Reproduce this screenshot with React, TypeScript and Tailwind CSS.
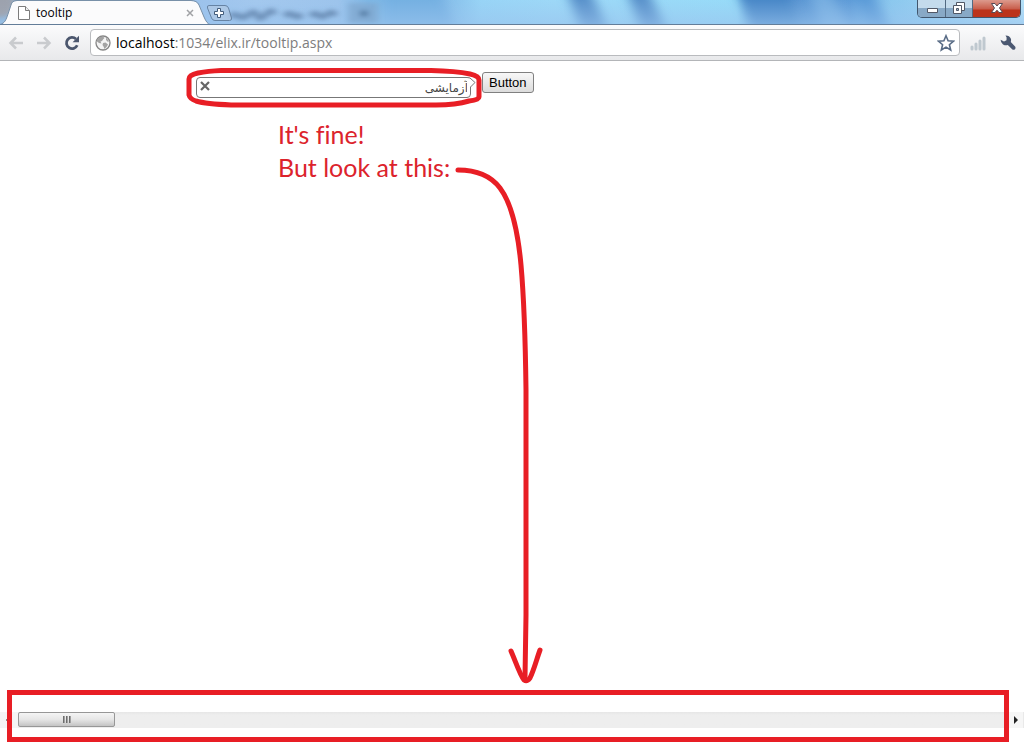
import React from "react";

function Glass() {
  return (
    <svg
      className="absolute inset-0 h-full w-full"
      viewBox="0 0 1024 25"
      preserveAspectRatio="none"
      aria-hidden="true"
    >
      <defs>
        <linearGradient id="sky" x1="0" x2="1" y1="0" y2="0">
          <stop offset="0" stopColor="#8fb4d6" />
          <stop offset="0.2" stopColor="#9dc3ec" />
          <stop offset="0.25" stopColor="#a3c8ee" />
          <stop offset="0.33" stopColor="#9dc4ec" />
          <stop offset="0.36" stopColor="#7db8e6" />
          <stop offset="0.42" stopColor="#7db3e3" />
          <stop offset="0.47" stopColor="#98d4f6" />
          <stop offset="0.54" stopColor="#9dd8f7" />
          <stop offset="0.72" stopColor="#97dbf8" />
          <stop offset="0.75" stopColor="#5a94d0" />
          <stop offset="0.83" stopColor="#5f9cd8" />
          <stop offset="0.87" stopColor="#8bc8ee" />
          <stop offset="1" stopColor="#b5e2f8" />
        </linearGradient>
        <linearGradient id="haze" x1="0" x2="0" y1="0" y2="1">
          <stop offset="0" stopColor="#9ac4ee" stopOpacity="0" />
          <stop offset="1" stopColor="#9ac4ee" stopOpacity="0.6" />
        </linearGradient>
        <filter id="soft" x="-20%" y="-50%" width="140%" height="200%">
          <feGaussianBlur stdDeviation="6 2" />
        </filter>
        <filter id="ghost" x="-20%" y="-50%" width="140%" height="200%">
          <feGaussianBlur stdDeviation="3 2" />
        </filter>
      </defs>
      <rect width="1024" height="25" fill="url(#sky)" />
      <g filter="url(#soft)">
        <path d="M568 -5H592L608 30H580Z" fill="#5a92cb" />
        <path d="M628 -5H650L666 30H640Z" fill="#5a92cb" />
        <path d="M385 -5H440L455 30H385Z" fill="#74b0e2" />
        <path d="M738 -5H790L800 30H752Z" fill="#4a88c8" />
        <path d="M810 -5H832L850 30H822Z" fill="#76ade0" />
        <path d="M852 -5H872L890 30H866Z" fill="#5c9bd8" />
      </g>
      <rect width="1024" height="25" fill="url(#haze)" />
      <g filter="url(#ghost)">
        <rect x="348" y="3" width="30" height="21" fill="#7fa5cd" opacity="0.7" />
        <path
          d="M230 17q5-3 9 0t10-2 8 1 9-1 8 0M284 16q6-3 10 0t8-1M310 16q6-3 9 0t8-1 9 1"
          fill="none"
          stroke="#4b6c95"
          strokeWidth="6"
          opacity="0.6"
        />
        <path d="M360 14h8" stroke="#42678f" strokeWidth="6" opacity="0.7" />
      </g>
      <ellipse cx="0" cy="4" rx="15" ry="14" fill="#ad8d7d" opacity="0.45" filter="url(#ghost)" />
    </svg>
  );
}

function TabStrip() {
  return (
    <header className="relative flex h-[25px] items-start overflow-hidden border-b border-[#637d99] bg-[#8fbde8]">
      <Glass />
      <div className="relative z-10 -mb-px flex h-[25px] w-[210px] shrink-0 items-center pl-4 pr-3">
        <svg className="absolute left-0 top-0 h-[25px] w-[210px]" viewBox="0 0 210 25" aria-hidden="true">
          <path
            d="M0 25C5 23 6 20 8 14L11 5Q12 1 17 1H191Q197 1 199 5L204 17Q207 24 210 25Z"
            fill="#fbfbfc"
          />
          <path
            d="M0 24.5C5 23 6 20 8 14L11 5Q12 .5 17 .5H191Q197 .5 199 5L204 17Q207 24 210 24.5"
            fill="none"
            stroke="#7890a8"
          />
        </svg>
        <svg className="relative h-4 w-4 shrink-0" viewBox="0 0 16 16" aria-hidden="true">
          <path d="M2.500 1.500H9.500L13.500 5.500V14.500H2.500Z" fill="#fff" stroke="#7c7c7c" />
          <path d="M9.500 1.500V5.500H13.500" fill="#eee" stroke="#7c7c7c" />
        </svg>
        <span className="relative ml-1 flex-1 font-['Open_Sans',sans-serif] text-[12px] leading-4 text-black">
          tooltip
        </span>
        <button type="button" aria-label="Close tab" className="relative flex h-4 w-4 items-center justify-center">
          <svg className="h-2 w-2" viewBox="0 0 8 8" aria-hidden="true">
            <path d="M1 1L7 7M7 1L1 7" stroke="#a0a2a5" strokeWidth="1.500" />
          </svg>
        </button>
      </div>
      <button type="button" aria-label="New tab" className="relative z-10 -ml-1 mt-1 h-[18px] w-[27px] shrink-0">
        <svg className="h-[18px] w-[27px]" viewBox="0 0 27 18" aria-hidden="true">
          <path
            d="M3 1.500H19Q21.500 1.500 22.500 4L25.500 14Q26 16.500 23.500 16.500H9Q6.500 16.500 5.500 14L1.500 4Q.8 1.500 3 1.500Z"
            fill="#b3cae2"
            fillOpacity=".65"
            stroke="#6683a4"
          />
          <path
            d="M11.500 4.500H14.500V7.500H17.500V10.500H14.500V13.500H11.500V10.500H8.500V7.500H11.500Z"
            fill="#fff"
            stroke="#435c7b"
          />
        </svg>
      </button>
      <div className="relative z-10 ml-auto mr-[3px] flex h-[18px] overflow-hidden rounded-b-[5px] border border-t-0 border-[#41566d]">
        <button
          type="button"
          aria-label="Minimize"
          className="flex w-7 items-center justify-center border-r border-[#526a82] bg-linear-to-b from-[#c4dbec] from-50% to-[#88a9c6] to-50%"
        >
          <svg className="h-4 w-4" viewBox="0 0 16 16" aria-hidden="true">
            <path d="M3.500 7.500H13.500V11.500H3.500Z" fill="#fff" stroke="#515866" />
          </svg>
        </button>
        <button
          type="button"
          aria-label="Restore"
          className="flex w-[27px] items-center justify-center border-r border-[#526a82] bg-linear-to-b from-[#c4dbec] from-50% to-[#88a9c6] to-50%"
        >
          <svg className="h-4 w-4" viewBox="0 0 16 16" aria-hidden="true">
            <path d="M5.500 1.500H13.500V9.500H5.500Z" fill="#fff" stroke="#515866" />
            <path d="M2.500 4.500H10.500V12.500H2.500Z" fill="#fff" stroke="#515866" />
            <path d="M5.500 7.500H7.500V9.500H5.500Z" fill="#9bb8d0" stroke="#515866" />
          </svg>
        </button>
        <button
          type="button"
          aria-label="Close window"
          className="flex w-[47px] items-center justify-center bg-linear-to-b from-[#dc9a8d] from-0% via-[#c9604e] via-50% to-[#bb331b] to-60%"
        >
          <svg className="h-4 w-4" viewBox="0 0 16 16" aria-hidden="true">
            <path
              d="M2.500 2.500H6L8 5 10 2.500H13.500L10.500 7 13.500 11.500H10L8 9.200 6 11.500H2.500L5.500 7Z"
              fill="#fff"
              stroke="#574b55"
            />
          </svg>
        </button>
      </div>
    </header>
  );
}

function Toolbar() {
  return (
    <nav
      aria-label="Navigation"
      className="flex h-9 items-center border-b border-[#b3b5b8] bg-linear-to-b from-[#fbfbfc] to-[#e8e9eb] pl-2 pr-2"
    >
      <button type="button" aria-label="Back" className="h-4 w-4">
        <svg viewBox="0 0 16 16" aria-hidden="true">
          <path d="M15 8H3M8 2.500L2.500 8 8 13.500" fill="none" stroke="#c9cbce" strokeWidth="2.500" />
        </svg>
      </button>
      <button type="button" aria-label="Forward" className="ml-3 h-4 w-4">
        <svg viewBox="0 0 16 16" aria-hidden="true">
          <path d="M1 8H13M8 2.500L13.500 8 8 13.500" fill="none" stroke="#c9cbce" strokeWidth="2.500" />
        </svg>
      </button>
      <button type="button" aria-label="Reload" className="ml-3 h-4 w-4">
        <svg viewBox="0 0 16 16" aria-hidden="true">
          <path d="M12 4A5.600 5.600 0 1 0 13.200 10.200" fill="none" stroke="#4b566d" strokeWidth="2.800" />
          <path d="M15 .8V7.200H8.600Z" fill="#4b566d" />
        </svg>
      </button>
      <div className="ml-[10px] flex h-[27px] min-w-0 flex-1 items-center rounded-[4px] border border-[#b9bbbe] bg-white px-1">
        <svg className="h-4 w-4 shrink-0" viewBox="0 0 16 16" aria-hidden="true">
          <circle cx="8" cy="8" r="7" fill="#f4f4f4" stroke="#858585" strokeWidth="1.300" />
          <path
            d="M2 5Q4 1.500 8 1.600L9.500 3 8 4.500 7 6 5.500 6.500 6.500 8.500 4 8 2 6.500ZM8 8L10.500 7.500 13 9.500 11.500 12 9.500 14 8.500 11.500 7.500 10ZM11 2.500L14 6 13 7 11 5Z"
            fill="#a3a3a3"
          />
        </svg>
        <p
          role="textbox"
          aria-label="Address"
          tabIndex={0}
          className="ml-[5px] min-w-0 flex-1 truncate font-['Open_Sans',sans-serif] text-[14px] leading-5 text-[#7d7d7d]"
        >
          <span className="text-black">localhost</span>:1034/elix.ir/tooltip.aspx
        </p>
        <button type="button" aria-label="Bookmark this page" className="h-[18px] w-[18px]">
          <svg viewBox="0 0 18 18" aria-hidden="true">
            <path
              d="M9 1.800L11.100 6.800 16.500 7.200 12.400 10.700 13.700 16 9 13.100 4.300 16 5.600 10.700 1.500 7.200 6.900 6.800Z"
              fill="#fff"
              stroke="#596c86"
              strokeWidth="1.600"
            />
          </svg>
        </button>
      </div>
      <button type="button" aria-label="Signal" className="ml-[10px] h-4 w-4">
        <svg viewBox="0 0 16 16" aria-hidden="true">
          <path
            d="M2 14V12M6 14V9M10 14V6M14 14V3"
            stroke="#bfc8cf"
            strokeWidth="3"
            strokeLinecap="round"
          />
        </svg>
      </button>
      <button type="button" aria-label="Settings" className="ml-[14px] h-4 w-4">
        <svg viewBox="0 0 16 16" aria-hidden="true">
          <path
            d="M5.500 .6Q9.500 .5 11 4Q11.300 5.700 10.800 7L15.300 11.700Q16 13 15 14.200 13.800 15.300 12.400 14.600L7.800 10Q5.500 10.800 3 9.400 .6 7.500 .6 4.800L4 6.400 6.500 5.200 6.600 2.600Z"
            fill="#4b5871"
          />
        </svg>
      </button>
    </nav>
  );
}

function Tooltip() {
  return (
    <div className="relative mt-[5px] w-[275px]">
      <div
        role="tooltip"
        dir="rtl"
        className="flex h-[21px] items-center justify-between rounded-[4px] border border-[#777] bg-white pl-[3px] pr-[2px]"
      >
        <span
          lang="fa"
          className="pt-px font-['DejaVu_Sans',sans-serif] text-[12px] leading-4 text-[#444]"
        >
          آزمایشی
        </span>
        <button type="button" aria-label="Close tooltip" className="-mt-1 h-[10px] w-[10px]">
          <svg viewBox="0 0 10 10" aria-hidden="true">
            <path d="M1 1L9 9M9 1L1 9" stroke="#666" strokeWidth="2.200" />
          </svg>
        </button>
      </div>
      <svg className="absolute -right-[5px] top-0 h-[16px] w-[9px]" viewBox="0 0 9 16" aria-hidden="true">
        <path d="M0 0L3 1 8 5.500 3.500 10V15H0Z" fill="#fff" />
        <path d="M0 .5L3 1 8 5.500 3.500 10V15" fill="none" stroke="#777" />
      </svg>
      <svg
        className="absolute -left-[10px] -top-[11px] h-[44px] w-[298px]"
        viewBox="0 0 298 44"
        aria-hidden="true"
      >
        <path
          d="M35 4.500H245Q270 5 284 8 293 10 293 14V31Q293 34 283 35 270 39 250 39H45Q20 38 10 35 4 33 3 29V13Q3 9 12 7 22 5 35 4.500Z"
          fill="none"
          stroke="#e81e25"
          strokeWidth="5"
        />
      </svg>
    </div>
  );
}

function Scrollbar() {
  return (
    <div className="relative mb-6 flex h-4 items-stretch">
      <button type="button" aria-label="Scroll left" className="flex w-[18px] items-center bg-[#f5f5f5] pl-[6px]">
        <svg className="h-2 w-1" viewBox="0 0 4 8" aria-hidden="true">
          <path d="M4 0V8L0 4Z" fill="#222" />
        </svg>
      </button>
      <div
        role="scrollbar"
        aria-label="Horizontal scroll"
        aria-orientation="horizontal"
        aria-controls="page"
        aria-valuenow={0}
        aria-valuemin={0}
        aria-valuemax={100}
        className="flex flex-1 bg-linear-to-b from-[#e6e6e6] to-[#eeeeee] to-20%"
      >
        <div className="flex h-[15px] w-[97px] items-center justify-center gap-px rounded-[2px] border border-[#979797] bg-linear-to-b from-[#f5f5f5] from-0% via-[#e6e6e6] via-50% to-[#c4c4c4] to-100%">
          <span className="h-[7px] w-[2px] bg-linear-to-r from-[#555] to-[#bbb]" />
          <span className="h-[7px] w-[2px] bg-linear-to-r from-[#555] to-[#bbb]" />
          <span className="h-[7px] w-[2px] bg-linear-to-r from-[#555] to-[#bbb]" />
        </div>
      </div>
      <button
        type="button"
        aria-label="Scroll right"
        className="flex w-4 items-center border-r border-[#e9e9e9] bg-[#f6f6f6] pl-[6px]"
      >
        <svg className="h-2 w-1" viewBox="0 0 4 8" aria-hidden="true">
          <path d="M0 0V8L4 4Z" fill="#222" />
        </svg>
      </button>
      <div className="pointer-events-none absolute -bottom-[14px] -top-[22px] left-[7px] right-[15px] border-[5px] border-[#e81e25]" />
    </div>
  );
}

export default function App() {
  return (
    <div className="flex min-h-screen flex-col bg-white">
      <TabStrip />
      <Toolbar />
      <main id="page" className="relative flex flex-1 flex-col">
        <div className="flex items-start pl-[196px] pt-[11px]">
          <Tooltip />
          <button
            type="button"
            className="ml-[11px] h-[21px] rounded-[3px] border border-[#808080] bg-linear-to-b from-[#f8f8f8] to-[#dcdcdc] px-[6px] font-['Liberation_Sans',sans-serif] text-[13px] leading-4 text-black"
          >
            Button
          </button>
        </div>
        <p className="pl-[278px] pt-5 font-['Lato',sans-serif] text-[25px] leading-[33px] text-[#dc232c] [font-variant-ligatures:none]">
          It's fine!
          <br />
          But look at this:
        </p>
        <svg
          className="pointer-events-none absolute left-[450px] top-[99px] h-[530px] w-[100px]"
          viewBox="0 0 100 530"
          fill="none"
          stroke="#e81e25"
          strokeWidth="5"
          strokeLinecap="round"
          strokeLinejoin="round"
          aria-hidden="true"
        >
          <path d="M8 10C28 10 41 16 50 28C62 44 68 72 71 105Q75 150 76 230V455L75 518" />
          <path d="M61 491C65 500 70 515 74 520Q77 522 80 518C84 510 87 498 90 490" />
        </svg>
      </main>
      <Scrollbar />
    </div>
  );
}
